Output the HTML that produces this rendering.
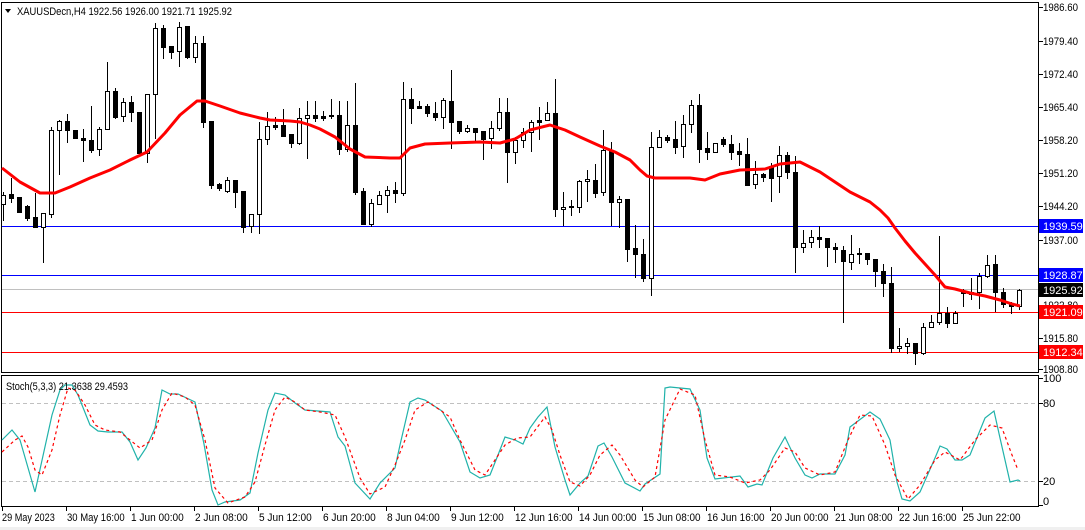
<!DOCTYPE html>
<html><head><meta charset="utf-8">
<style>
html,body{margin:0;padding:0;background:#fff;width:1085px;height:530px;overflow:hidden}
svg{display:block;font-family:"Liberation Sans","DejaVu Sans",sans-serif;font-size:11px}
</style></head>
<body>
<svg id="c" width="1085" height="530" viewBox="0 0 1085 530" shape-rendering="crispEdges">
<rect x="0" y="0" width="1085" height="530" fill="#fff"/>
<rect x="0" y="527" width="1085" height="3" fill="#f0f0f0"/>
<rect x="1.5" y="2.5" width="1037" height="370" fill="none" stroke="#000"/>
<rect x="1.5" y="375.5" width="1037" height="131" fill="none" stroke="#000"/>
<line x1="2" y1="226.5" x2="1038" y2="226.5" stroke="#0000ff"/>
<line x1="2" y1="275.5" x2="1038" y2="275.5" stroke="#0000ff"/>
<line x1="2" y1="289.5" x2="1038" y2="289.5" stroke="#c0c0c0"/>
<line x1="2" y1="312.5" x2="1038" y2="312.5" stroke="#ff0000"/>
<line x1="2" y1="352.5" x2="1038" y2="352.5" stroke="#ff0000"/>
<line x1="2" y1="403.5" x2="1038" y2="403.5" stroke="#c0c0c0" stroke-dasharray="4,3"/>
<line x1="2" y1="481.5" x2="1038" y2="481.5" stroke="#c0c0c0" stroke-dasharray="4,3"/>
<g id="candles"></g>
<polyline shape-rendering="auto" fill="none" stroke="#ff0000" stroke-width="3" stroke-linejoin="round" points="2,168 20,182 40,193 55,193 70,187 90,178 110,170 130,160 147,152 165,133 180,115 197,101 205,101 220,106 240,113 260,118 270,120 290,121 300,122 310,125 320,129 335,137 350,149 365,157 390,158 400,158 410,148 425,144 450,143 480,142 500,143 515,139 530,130 550,125 565,130 580,137 600,146 615,152 630,160 640,170 647,176 655,178 690,178 705,180 720,174 740,170 765,169 780,164 800,162 820,172 835,182 850,192 860,197 870,202 880,210 888,218 895,228 905,241 915,253 925,264 935,275 945,287 955,289 970,293 985,296 1000,300 1012,304 1020,306"/>
<polyline shape-rendering="auto" fill="none" stroke="#20b2aa" stroke-width="1.2" points="2,440 12,430 20,440 35,492 52,415 60,390 65,385 72,385 78,395 90,425 98,431 108,432 122,432 130,442 138,460 146,448 155,428 162,390 170,394 178,394 195,402 204,444 212,490 218,505 225,502 240,500 250,493 258,453 268,410 275,393 285,395 295,403 305,410 318,411 330,412 338,437 345,446 355,483 370,499 380,483 395,468 400,445 410,402 418,398 425,400 442,411 460,442 470,472 480,478 490,475 498,455 505,437 515,440 523,444 530,428 538,417 547,407 555,447 565,480 570,495 580,483 588,476 598,446 604,443 612,457 625,483 640,491 645,484 660,474 665,388 670,387 690,389 700,410 707,458 715,479 740,476 748,487 757,484 762,485 773,458 785,437 795,458 805,475 812,478 820,474 835,474 845,455 850,427 870,412 880,419 890,440 897,482 902,499 910,501 920,492 935,458 940,446 947,449 955,460 962,460 970,455 985,418 994,411 1000,438 1010,482 1018,480 1020,481"/>
<polyline shape-rendering="auto" fill="none" stroke="#ff0000" stroke-width="1.2" stroke-dasharray="3,3" points="2,452 15,440 22,436 28,447 35,470 42,475 52,450 60,415 68,388 75,390 85,405 95,425 105,430 120,432 130,440 140,448 152,440 162,410 172,393 185,397 195,405 205,440 215,488 228,503 245,497 255,482 265,445 275,410 285,397 295,402 305,410 320,412 335,415 345,437 360,478 370,494 385,487 395,465 405,440 415,410 428,402 440,410 450,417 460,440 475,470 485,475 495,460 505,445 517,438 530,437 545,417 552,430 560,455 570,482 580,486 590,475 600,455 612,445 620,455 635,480 643,487 655,477 665,420 680,389 695,395 705,440 715,475 730,477 745,483 760,480 770,470 785,448 795,452 805,468 820,475 835,472 848,440 860,415 872,416 885,445 895,475 908,499 920,485 935,460 945,452 960,460 975,440 990,425 1002,428 1012,455 1018,470"/>
<path d="M5,9 L11,9 L8,13 Z" fill="#000" shape-rendering="auto"/>
<text x="17" y="15" fill="#000" textLength="215" lengthAdjust="spacingAndGlyphs">XAUUSDecn,H4  1922.56 1926.00 1921.71 1925.92</text>
<text x="6" y="390" fill="#000" textLength="122" lengthAdjust="spacingAndGlyphs">Stoch(5,3,3) 21.3638 29.4593</text>
<g id="axis" fill="#000"></g>
<rect x="1039" y="219" width="44" height="14" fill="#0000ff"/><text x="1043" y="230" fill="#fff">1939.59</text>
<rect x="1039" y="268" width="44" height="14" fill="#0000ff"/><text x="1043" y="279" fill="#fff">1928.87</text>
<rect x="1039" y="283" width="44" height="14" fill="#000"/><text x="1043" y="294" fill="#fff">1925.92</text>
<rect x="1039" y="305" width="44" height="14" fill="#ff0000"/><text x="1043" y="316" fill="#fff">1921.09</text>
<rect x="1039" y="345" width="44" height="14" fill="#ff0000"/><text x="1043" y="356" fill="#fff">1912.34</text>
</svg>
<script>
var D=[[192,220,195,204,1],[178,202,194,198,0],[197,212,197,212,0],[205,220,206,218,0],[193,227,217,227,0],[213,262,213,227,1],[127,217,130,214,1],[120,174,121,130,1],[114,142,121,130,0],[130,138,130,138,0],[129,161,138,140,0],[106,152,140,150,0],[127,155,129,149,1],[62,129,91,129,1],[88,118,91,117,0],[98,121,102,116,1],[96,121,102,112,0],[112,155,112,153,0],[94,162,94,153,1],[23,138,28,94,1],[25,58,28,47,0],[46,58,46,52,0],[22,66,27,51,1],[26,58,26,57,0],[36,62,43,57,1],[36,127,43,122,0],[121,188,121,185,0],[183,190,184,188,0],[177,192,180,191,1],[180,207,180,192,0],[191,232,191,227,0],[214,232,214,226,1],[122,233,139,214,1],[112,144,126,139,1],[117,129,125,127,0],[109,136,125,136,0],[134,147,134,143,0],[108,144,118,143,1],[101,158,115,118,1],[101,121,115,118,0],[111,120,116,118,0],[99,118,115,116,0],[101,154,115,149,0],[101,151,125,149,1],[83,194,125,192,0],[188,224,191,224,0],[199,226,203,224,1],[191,204,195,204,1],[186,212,190,195,1],[182,202,190,193,0],[82,195,99,193,1],[88,123,99,108,0],[101,108,106,108,0],[104,116,106,113,0],[102,120,113,117,0],[98,128,100,117,1],[70,148,101,122,0],[121,133,121,131,0],[125,132,128,131,1],[128,141,128,132,0],[131,159,131,139,0],[121,148,128,138,1],[98,130,112,128,1],[98,182,112,152,0],[137,163,140,152,1],[128,147,132,140,1],[120,151,122,132,1],[107,139,120,122,0],[102,120,113,120,1],[79,216,113,209,0],[192,225,207,209,1],[200,215,206,207,0],[180,212,181,207,1],[170,201,179,181,1],[164,197,180,193,0],[130,195,150,192,1],[142,225,150,202,0],[196,227,199,202,1],[199,261,199,249,0],[225,277,248,254,0],[239,281,254,278,0],[132,295,147,278,1],[130,147,137,147,1],[135,142,137,140,0],[121,153,139,147,0],[115,157,124,146,1],[100,132,105,124,1],[94,162,105,149,0],[132,159,148,152,0],[143,152,143,152,1],[137,146,139,144,0],[135,159,144,152,0],[143,165,151,154,0],[138,185,154,185,0],[161,188,174,184,1],[173,181,174,177,0],[163,201,166,178,0],[146,192,155,176,1],[152,178,155,172,0],[156,272,172,247,0],[230,252,243,247,1],[230,247,237,242,1],[226,247,237,239,0],[238,266,238,247,0],[243,262,247,249,0],[246,322,250,261,0],[235,269,254,262,1],[248,263,253,254,0],[253,264,253,259,0],[259,286,259,271,0],[264,296,271,283,0],[267,352,283,348,0],[328,351,346,348,1],[338,353,343,346,1],[343,364,343,353,0],[323,354,327,353,1],[315,327,322,327,1],[236,324,313,322,1],[307,327,313,323,0],[311,323,313,323,1],[289,306,292,293,0],[278,299,292,294,0],[273,308,276,292,1],[255,277,265,276,1],[255,311,264,292,0],[288,307,292,304,0],[302,313,304,306,0],[289,309,290,306,1]];
var NS="http://www.w3.org/2000/svg";
function el(t,a,p){var e=document.createElementNS(NS,t);for(var k in a)e.setAttribute(k,a[k]);p.appendChild(e);return e;}
var g=document.getElementById('candles');
for(var i=0;i<D.length;i++){var d=D[i],cx=3+8*i;
 el('rect',{x:cx,y:d[0],width:1,height:d[1]-d[0]+1,fill:'#000'},g);
 var h=Math.max(d[3]-d[2],1);
 el('rect',{x:cx-2,y:d[2],width:5,height:h+1,fill:'#000'},g);
 if(d[4]&&h>1)el('rect',{x:cx-1,y:d[2]+1,width:3,height:h-1,fill:'#fff'},g);}
var ax=document.getElementById('axis');
var P=[["1986.60",7],["1979.40",41],["1972.40",74],["1965.40",107],["1958.20",140],["1951.20",173],["1944.20",206],["1937.00",240],["1930.00",272],["1922.80",305],["1915.80",338],["1908.80",369]];
P.forEach(function(p){el('rect',{x:1039,y:p[1],width:4,height:1,fill:'#000'},ax);var t=el('text',{x:1043,y:p[1]+4,textLength:35,lengthAdjust:'spacingAndGlyphs'},ax);t.textContent=p[0];});
[["100",382,378],["80",407,403],["20",485,481],["0",505,505]].forEach(function(p){el('rect',{x:1039,y:p[2],width:4,height:1,fill:'#000'},ax);var t=el('text',{x:1043,y:p[1]},ax);t.textContent=p[0];});
var T=["29 May 2023","30 May 16:00","1 Jun 00:00","2 Jun 08:00","5 Jun 12:00","6 Jun 20:00","8 Jun 04:00","9 Jun 12:00","12 Jun 16:00","14 Jun 00:00","15 Jun 08:00","16 Jun 16:00","20 Jun 00:00","21 Jun 08:00","22 Jun 16:00","25 Jun 22:00"];
T.forEach(function(s,i){var x=2+64*i;el('rect',{x:x,y:507,width:1,height:4,fill:'#000'},ax);var t=el('text',{x:x+(i==0?0:1),y:521,textLength:(s.length*4.8).toFixed(1),lengthAdjust:'spacingAndGlyphs'},ax);t.textContent=s;});
</script>
</body></html>
